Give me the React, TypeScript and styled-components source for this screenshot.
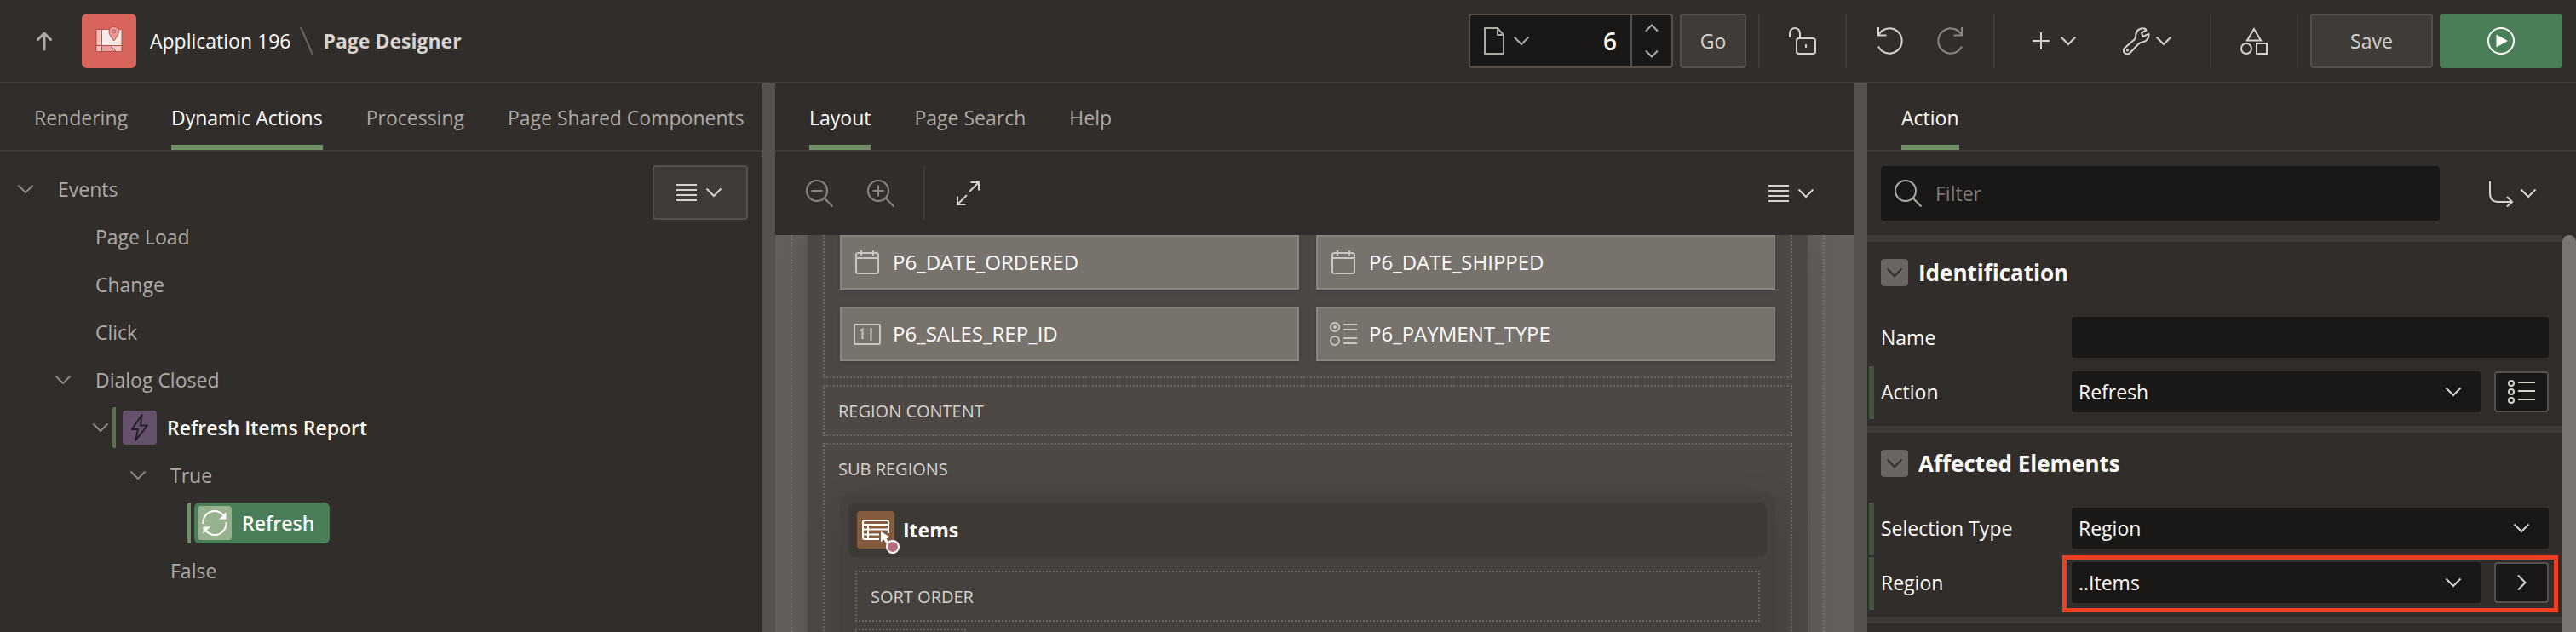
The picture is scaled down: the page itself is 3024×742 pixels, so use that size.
import React from 'react';
import styled, { createGlobalStyle, css } from 'styled-components';

const color = {
  bg: '#312d2a',
  line: '#3f3b37',
  splitter: '#56514c',
  field: '#191816',
  button: '#3f3b37',
  buttonBorder: '#55504b',
  text: '#fcfbfa',
  muted: '#aeaaa6',
  dim: '#8b8681',
  icon: '#d6d2ce',
  accent: '#739168',
  green: '#4a7e59',
};

const GlobalStyle = createGlobalStyle`
  *, *::before, *::after { box-sizing: border-box; }
  body {
    margin: 0;
    background: ${color.bg};
    color: ${color.text};
    font: 400 23px/32px 'Open Sans', 'Noto Sans', sans-serif;
    overflow: hidden;
  }
  button, input, select { font: inherit; color: inherit; margin: 0; }
  button { background: none; border: 0; padding: 0; cursor: pointer; }
  svg { display: block; flex: none; fill: none; }
  h2, ul { margin: 0; padding: 0; }
`;

/* ---------- shell ---------- */

const Page = styled.div`
  height: 100vh;
  display: flex;
  flex-direction: column;
`;

const Header = styled.header`
  flex: none;
  height: 98px;
  display: flex;
  align-items: center;
  padding: 0 16px 0 20px;
  border-bottom: 2px solid ${color.line};
`;

const Workspace = styled.div`
  flex: 1;
  min-height: 0;
  display: grid;
  grid-template-columns: minmax(0, 894fr) 16px minmax(0, 1266fr) 16px minmax(0, 832fr);
  grid-template-rows: minmax(0, 1fr);
`;

const Splitter = styled.div`
  background: ${color.splitter};
`;

const Panel = styled.section`
  display: flex;
  flex-direction: column;
  min-width: 0;
  overflow: hidden;
`;

/* ---------- header ---------- */

const UpButton = styled.button`
  width: 64px;
  height: 64px;
  display: grid;
  place-items: center;
  color: ${color.muted};
`;

const AppBadge = styled.a`
  width: 64px;
  height: 64px;
  margin-left: 12px;
  border-radius: 6px;
  background: #d9645b;
`;

const Crumbs = styled.nav`
  display: flex;
  align-items: center;
  gap: 11px;
  margin-left: 16px;
  white-space: nowrap;
  a {
    color: ${color.text};
    text-decoration: none;
  }
  strong {
    font-weight: 700;
    color: ${color.icon};
  }
`;

const HeaderTools = styled.div`
  display: flex;
  align-items: center;
  margin-left: auto;
`;

const PageFinder = styled.div`
  display: flex;
  width: 240px;
  height: 64px;
  border: 2px solid ${color.buttonBorder};
  border-radius: 4px;
  background: ${color.field};
  overflow: hidden;
`;

const PickerButton = styled.button`
  display: flex;
  align-items: center;
  gap: 4px;
  padding-left: 12px;
  color: ${color.muted};
`;

const PageNumber = styled.input`
  flex: 1;
  min-width: 0;
  padding: 0 16px;
  border: 0;
  background: none;
  text-align: right;
  font-size: 28px;
  font-weight: 600;
`;

const Stepper = styled.div`
  width: 48px;
  display: grid;
  grid-template-rows: 1fr 1fr;
  border-left: 2px solid ${color.buttonBorder};
  color: ${color.muted};
  button {
    display: grid;
    place-items: center;
  }
`;

const SolidButton = styled.button<{ $width: number; $primary?: boolean }>`
  flex: none;
  width: ${(p) => p.$width}px;
  height: 64px;
  margin-left: 8px;
  display: grid;
  place-items: center;
  border-radius: 4px;
  border: 2px solid ${(p) => (p.$primary ? color.green : color.buttonBorder)};
  background: ${(p) => (p.$primary ? color.green : color.button)};
  color: ${(p) => (p.$primary ? color.text : color.icon)};
  font-weight: 500;
`;

const ToolGroup = styled.div`
  display: flex;
  height: 64px;
  margin-left: 14px;
  padding-left: 14px;
  border-left: 2px solid ${color.line};
`;

const HeaderEnd = styled.div`
  display: flex;
  height: 64px;
  margin-left: 14px;
  padding-left: 6px;
  border-left: 2px solid ${color.line};
`;

const IconButton = styled.button<{ $dim?: boolean }>`
  width: 72px;
  height: 64px;
  display: grid;
  place-items: center;
  color: ${(p) => (p.$dim ? color.dim : color.icon)};
`;

const MenuButton = styled.button<{ $boxed?: boolean }>`
  flex: none;
  width: 112px;
  height: 64px;
  display: flex;
  align-items: center;
  justify-content: center;
  gap: 4px;
  padding-right: 4px;
  color: ${color.icon};
  ${(p) =>
    p.$boxed &&
    css`
      background: ${color.button};
      border: 2px solid ${color.buttonBorder};
      border-radius: 4px;
    `}
`;

/* ---------- tabs ---------- */

const TabBar = styled.div`
  flex: none;
  height: 80px;
  display: flex;
  gap: 51px;
  padding-left: 40px;
  border-bottom: 2px solid ${color.line};
`;

const Tab = styled.button<{ $active?: boolean }>`
  height: 78px;
  padding-top: 8px;
  white-space: nowrap;
  color: ${(p) => (p.$active ? color.text : color.muted)};
  border-bottom: 6px solid ${(p) => (p.$active ? color.accent : 'transparent')};
`;

/* ---------- tree ---------- */

const TreeArea = styled.div`
  display: flex;
  align-items: flex-start;
  padding: 16px 16px 0 0;
`;

const Tree = styled.ul`
  flex: 1;
  min-width: 0;
  list-style: none;
`;

const TreeRow = styled.li<{ $level: number }>`
  height: 56px;
  display: flex;
  align-items: center;
  padding-left: ${(p) => p.$level * 44 - 28}px;
  white-space: nowrap;
  color: ${color.muted};
`;

const Toggle = styled.button`
  width: 28px;
  height: 32px;
  display: grid;
  place-items: center;
  color: ${color.dim};
`;

const ToggleSpace = styled.span`
  width: 28px;
`;

const NodeLabel = styled.span`
  padding-left: 24px;
`;

const MarkedNode = styled.span<{ $selected?: boolean }>`
  height: 48px;
  display: flex;
  padding-left: 4px;
  border-left: 4px solid ${(p) => (p.$selected ? '#739168' : '#58724f')};
  border-radius: 2px;
`;

const NodePill = styled.span<{ $selected?: boolean }>`
  display: flex;
  align-items: center;
  gap: 12px;
  padding: 0 18px 0 4px;
  border-radius: 6px;
  color: ${color.text};
  font-weight: 600;
  background: ${(p) => (p.$selected ? color.green : 'none')};
`;

const NodeIcon = styled.span<{ $bg: string; $fg: string }>`
  width: 40px;
  height: 40px;
  display: grid;
  place-items: center;
  border-radius: 4px;
  background: ${(p) => p.$bg};
  color: ${(p) => p.$fg};
`;

/* ---------- layout canvas ---------- */

const Toolbar = styled.div`
  flex: none;
  height: 98px;
  display: flex;
  align-items: center;
  padding: 0 16px;
`;

const Spacer = styled.span`
  flex: 1;
`;

const Canvas = styled.div`
  flex: 1;
  min-height: 0;
  display: flex;
  padding: 0 34px 0 18px;
  background: #65605b;
  overflow: hidden;
`;

const CanvasFrame = styled.div`
  flex: 1;
  min-width: 0;
  padding: 0 18px;
  border: dotted #7f7974;
  border-width: 0 2px;
`;

const RegionBox = styled.div`
  min-height: 100%;
  padding: 0 18px;
  display: flex;
  flex-direction: column;
  gap: 8px;
  background: #4d4844;
  box-shadow: 0 0 40px rgba(0, 0, 0, 0.2);
`;

const ItemSlot = styled.div`
  display: grid;
  grid-template-columns: 1fr 1fr;
  gap: 20px;
  padding: 0 18px 18px;
  border: 2px dotted #6b6662;
  border-top: 0;
`;

const PageItem = styled.div`
  height: 64px;
  display: flex;
  align-items: center;
  gap: 14px;
  padding-left: 14px;
  border: 2px solid #8b8580;
  background: #78726d;
  box-shadow: 0 2px 4px rgba(0, 0, 0, 0.15);
  color: ${color.text};
  font-size: 24px;
  font-weight: 500;
  svg {
    color: #c9c5c1;
  }
`;

const Slot = styled.div<{ $short?: boolean }>`
  flex: none;
  border: 2px dotted #6b6662;
  ${(p) => p.$short && 'width: 130px; height: 60px;'}
`;

const SlotTitle = styled.div`
  height: 56px;
  padding-left: 16px;
  font-size: 20px;
  line-height: 58px;
  color: ${color.icon};
`;

const SubRegion = styled.div`
  margin: 2px 18px 0;
  padding: 10px 10px 60px;
  border-radius: 10px;
  background: #45413c;
  box-shadow: 0 16px 48px rgba(0, 0, 0, 0.12);
`;

const SubRegionHead = styled.div`
  height: 64px;
  display: flex;
  align-items: center;
  gap: 10px;
  padding-left: 10px;
  border-radius: 8px;
  background: #3d3a35;
  font-weight: 700;
`;

const ReportIcon = styled.span`
  width: 44px;
  height: 44px;
  border-radius: 4px;
  background: #855b3d;
  svg {
    overflow: visible;
  }
`;

const SubSlots = styled.div`
  display: flex;
  flex-direction: column;
  gap: 8px;
  padding: 16px 8px 0;
`;

/* ---------- property editor ---------- */

const FilterBar = styled.div`
  flex: none;
  height: 98px;
  display: flex;
  align-items: center;
  gap: 32px;
  padding: 0 16px;
`;

const FilterBox = styled.label`
  flex: 1;
  height: 64px;
  display: flex;
  align-items: center;
  gap: 16px;
  padding: 0 16px;
  border-radius: 4px;
  background: ${color.field};
  color: ${color.muted};
  input {
    flex: 1;
    min-width: 0;
    padding: 0;
    border: 0;
    outline: 0;
    background: none;
  }
  input::placeholder {
    color: #7f7a75;
    opacity: 1;
  }
`;

const Properties = styled.div`
  flex: 1;
  min-height: 0;
  display: flex;
`;

const PropertyList = styled.div`
  flex: 1;
  min-width: 0;
`;

const ScrollThumb = styled.div`
  width: 16px;
  border-radius: 8px 8px 0 0;
  background: #7a7571;
`;

const Group = styled.section`
  border-top: 8px solid ${color.line};
  padding-bottom: 8px;
`;

const GroupHead = styled.div`
  display: flex;
  align-items: center;
  gap: 12px;
  padding: 20px 16px 28px;
  h2 {
    font-size: 26px;
    line-height: 32px;
    font-weight: 700;
  }
`;

const GroupToggle = styled.button`
  width: 32px;
  height: 32px;
  display: grid;
  place-items: center;
  border-radius: 4px;
  background: #6b6661;
  color: ${color.bg};
`;

const Property = styled.div<{ $changed?: boolean }>`
  height: 62px;
  margin: 2px 0 0 2px;
  display: flex;
  align-items: center;
  padding: 0 16px 2px 8px;
  border-left: 6px solid ${(p) => (p.$changed ? '#3d5742' : 'transparent')};
  label {
    flex: none;
    width: 224px;
    font-weight: 500;
  }
`;

const Controls = styled.div`
  position: relative;
  flex: 1;
  min-width: 0;
  display: flex;
  gap: 16px;
`;

const inputLook = css`
  width: 100%;
  height: 48px;
  padding: 0 8px;
  border: 0;
  border-radius: 4px;
  background: ${color.field};
  font-weight: 500;
  appearance: none;
`;

const TextInput = styled.input`
  ${inputLook}
`;

const SelectBox = styled.div`
  flex: 1;
  min-width: 0;
  display: grid;
  align-items: center;
  color: ${color.icon};
  > * {
    grid-area: 1 / 1;
  }
  select {
    ${inputLook}
    color: ${color.text};
  }
  svg {
    justify-self: end;
    margin-right: 20px;
    pointer-events: none;
  }
`;

const SideButton = styled.button`
  flex: none;
  width: 64px;
  height: 48px;
  display: grid;
  place-items: center;
  border: 2px solid ${color.buttonBorder};
  border-radius: 4px;
  background: ${color.field};
  color: ${color.icon};
`;

const Highlight = styled.div`
  position: absolute;
  inset: -8px -11px -11px;
  border: 5px solid #ee4025;
  pointer-events: none;
`;

/* ---------- icons ---------- */

const Icon = ({ size = 32, width = 2, children }: { size?: number; width?: number; children: React.ReactNode }) => (
  <svg width={size} height={size} viewBox={`0 0 ${size} ${size}`} stroke="currentColor" strokeWidth={width} aria-hidden="true">
    {children}
  </svg>
);

const Chevron = () => (
  <Icon size={24}>
    <path d="M3.5 7.5 12 16l8.500-8.500" />
  </Icon>
);
const ChevronSmall = ({ up }: { up?: boolean }) => (
  <Icon size={16}>
    <path d={up ? 'M1 11.500 8 4.500l7 7' : 'M1 4.500 8 11.500l7-7'} />
  </Icon>
);
const Lines = () => (
  <Icon>
    <path d="M4 7h24M4 13h24M4 19h24M4 25h24" />
  </Icon>
);
const Magnifier = ({ children }: { children?: React.ReactNode }) => (
  <Icon>
    <circle cx="13" cy="13" r="12" />
    <path d="m21.500 21.500 10 10" />
    {children}
  </Icon>
);
const Calendar = () => (
  <Icon>
    <rect x="3" y="5" width="26" height="24" rx="2.500" />
    <path d="M3 11h26M9 2v6M23 2v6" />
  </Icon>
);

const AppLogo = () => (
  <svg width="64" height="64" viewBox="0 0 64 64" stroke="#b5504a" strokeWidth="1" aria-hidden="true">
    <rect x="17" y="18.500" width="30" height="26" rx="1" fill="#f7ebe9" />
    <path d="M17 18.500h6.500v19H17z" fill="#eebfbb" />
    <path d="M17 37.500h6.500v7H17zM33.500 37.500H47v7h-6.500z" fill="#f0c7c4" />
    <path d="M23.500 37.500h10l7 7h-17z" fill="#e5a19c" />
    <path d="M37.700 32c-4-5-5.700-8.200-5.700-11a5.700 5.700 0 0 1 11.400 0c0 2.800-1.700 6-5.700 11z" fill="#e59a94" />
    <circle cx="37.700" cy="21" r="1.800" fill="#e5a19c" />
  </svg>
);

/* ---------- parts ---------- */

const Select = ({ id, value }: { id: string; value: string }) => (
  <SelectBox>
    <select id={id} defaultValue={value}>
      <option>{value}</option>
    </select>
    <Chevron />
  </SelectBox>
);

const Tabs = ({ names, active }: { names: string[]; active: string }) => (
  <TabBar role="tablist">
    {names.map((n) => (
      <Tab key={n} role="tab" aria-selected={n === active} $active={n === active}>
        {n}
      </Tab>
    ))}
  </TabBar>
);

const Branch = ({ level, label, open, children }: { level: number; label?: string; open?: boolean; children?: React.ReactNode }) => (
  <TreeRow $level={level}>
    {open ? (
      <Toggle aria-label="Collapse">
        <Chevron />
      </Toggle>
    ) : (
      <ToggleSpace />
    )}
    {label ? <NodeLabel>{label}</NodeLabel> : children}
  </TreeRow>
);

export default function App() {
  return (
    <Page>
      <GlobalStyle />
      <Header>
        <UpButton aria-label="Up">
          <Icon width={3}>
            <path d="M16 26V8M8.500 14.500 16 7l7.500 7.500" strokeLinecap="round" strokeLinejoin="round" />
          </Icon>
        </UpButton>
        <AppBadge href="#app" aria-label="Application">
          <AppLogo />
        </AppBadge>
        <Crumbs>
          <a href="#app">Application 196</a>
          <svg width="16" height="32" viewBox="0 0 16 32" stroke="#6b6661" strokeWidth="2" aria-hidden="true">
            <path d="M1 0l14 32" />
          </svg>
          <strong>Page Designer</strong>
        </Crumbs>
        <HeaderTools>
          <PageFinder>
            <PickerButton aria-label="Page finder">
              <Icon>
                <path d="M5 1h15l7 8v22H5zM20 1v8h7" strokeLinejoin="round" />
              </Icon>
              <Chevron />
            </PickerButton>
            <PageNumber aria-label="Page number" defaultValue="6" />
            <Stepper>
              <button aria-label="Next page">
                <ChevronSmall up />
              </button>
              <button aria-label="Previous page">
                <ChevronSmall />
              </button>
            </Stepper>
          </PageFinder>
          <SolidButton $width={78}>Go</SolidButton>
          <ToolGroup>
            <IconButton aria-label="Page unlocked">
              <Icon>
                <rect x="9" y="13" width="22" height="18" rx="3" />
                <path d="M1 12V7a6 6 0 0 1 12 0v6M20 20v4" />
              </Icon>
            </IconButton>
          </ToolGroup>
          <ToolGroup>
            <IconButton aria-label="Undo">
              <Icon>
                <path d="M3 9.500A14.600 14.600 0 1 1 3 22.500M3 0v9.500h9.500" />
              </Icon>
            </IconButton>
            <IconButton aria-label="Redo" $dim>
              <Icon>
                <path d="M29 9.500A14.600 14.600 0 1 0 29 22.500M29 0v9.500h-9.500" />
              </Icon>
            </IconButton>
          </ToolGroup>
          <ToolGroup>
            <MenuButton aria-label="Create">
              <Icon>
                <path d="M6 16h20M16 6v20" />
              </Icon>
              <Chevron />
            </MenuButton>
            <MenuButton aria-label="Utilities">
              <Icon>
                <path
                  strokeLinejoin="round"
                  d="M27.500 3.500 22 6.500l1.500 4.500 7-3.200C31 12 28.500 16.500 24 17.200c-3 .4-4 .6-5.500 2.300L8.500 30c-2 2-5.500 1.500-7-.5-1-2-.7-4 1-5.500l11-9.500c1.500-1.500 1.800-2.500 1.700-5C15.200 4 20 .8 24 1.200c1.500.1 3 .8 3.500 2.300z"
                />
                <circle cx="5.500" cy="27" r="0.600" />
              </Icon>
              <Chevron />
            </MenuButton>
          </ToolGroup>
          <ToolGroup>
            <IconButton aria-label="Shared components">
              <Icon>
                <path d="M16 2l8 13.500H8zM19 19h12v12H19z" />
                <circle cx="7" cy="25" r="6" />
              </Icon>
            </IconButton>
          </ToolGroup>
          <HeaderEnd>
            <SolidButton $width={144}>Save</SolidButton>
            <SolidButton $width={144} $primary aria-label="Save and run page">
              <Icon>
                <circle cx="16" cy="16" r="15" />
                <path d="M10.500 8.500v15L24 16z" fill="currentColor" stroke="none" />
              </Icon>
            </SolidButton>
          </HeaderEnd>
        </HeaderTools>
      </Header>

      <Workspace>
        <Panel>
          <Tabs names={['Rendering', 'Dynamic Actions', 'Processing', 'Page Shared Components']} active="Dynamic Actions" />
          <TreeArea>
            <Tree>
              <Branch level={1} open label="Events" />
              <Branch level={2} label="Page Load" />
              <Branch level={2} label="Change" />
              <Branch level={2} label="Click" />
              <Branch level={2} open label="Dialog Closed" />
              <Branch level={3} open>
                <MarkedNode>
                  <NodePill>
                    <NodeIcon $bg="#65516b" $fg="#231f26">
                      <Icon>
                        <path d="M18.500 1 7 18h7l-3 13L25 13.500h-8z" strokeLinejoin="round" />
                      </Icon>
                    </NodeIcon>
                    Refresh Items Report
                  </NodePill>
                </MarkedNode>
              </Branch>
              <Branch level={4} open label="True" />
              <Branch level={5}>
                <MarkedNode $selected>
                  <NodePill $selected>
                    <NodeIcon $bg="#98b18e" $fg="#fff">
                      <Icon>
                        <path d="M2.500 17A13.500 13.500 0 0 1 26 6.500M29.500 15A13.500 13.500 0 0 1 6 25.500" />
                        <path d="M29.500 3v8.500H21zM2.500 29v-8.500H11z" fill="currentColor" stroke="none" />
                      </Icon>
                    </NodeIcon>
                    Refresh
                  </NodePill>
                </MarkedNode>
              </Branch>
              <Branch level={4} label="False" />
            </Tree>
            <MenuButton $boxed aria-label="Tree options">
              <Lines />
              <Chevron />
            </MenuButton>
          </TreeArea>
        </Panel>

        <Splitter />

        <Panel>
          <Tabs names={['Layout', 'Page Search', 'Help']} active="Layout" />
          <Toolbar>
            <IconButton $dim aria-label="Zoom out">
              <Magnifier>
                <path d="M6.500 13h13" />
              </Magnifier>
            </IconButton>
            <IconButton $dim aria-label="Zoom in">
              <Magnifier>
                <path d="M6.500 13h13M13 6.500v13" />
              </Magnifier>
            </IconButton>
            <ToolGroup>
              <IconButton aria-label="Expand">
                <Icon>
                  <path d="M18 14 29 3M19.500 3H29v9.500M15 18 4 29M13.500 29H4v-9.500" />
                </Icon>
              </IconButton>
            </ToolGroup>
            <Spacer />
            <MenuButton aria-label="Layout options">
              <Lines />
              <Chevron />
            </MenuButton>
          </Toolbar>
          <Canvas>
            <CanvasFrame>
              <RegionBox>
                <ItemSlot>
                  <PageItem>
                    <Calendar />
                    P6_DATE_ORDERED
                  </PageItem>
                  <PageItem>
                    <Calendar />
                    P6_DATE_SHIPPED
                  </PageItem>
                  <PageItem>
                    <Icon>
                      <rect x="1" y="5" width="30" height="23" rx="1" />
                      <path d="M7.500 12.500 10.500 10.500V22M20.500 9v15" />
                    </Icon>
                    P6_SALES_REP_ID
                  </PageItem>
                  <PageItem>
                    <Icon>
                      <circle cx="6" cy="8" r="5" />
                      <circle cx="6" cy="24" r="5" />
                      <circle cx="6" cy="8" r="1" />
                      <path d="M16 5h16M16 11h16M16 21h16M16 27h16" />
                    </Icon>
                    P6_PAYMENT_TYPE
                  </PageItem>
                </ItemSlot>
                <Slot>
                  <SlotTitle>REGION CONTENT</SlotTitle>
                </Slot>
                <Slot>
                  <SlotTitle>SUB REGIONS</SlotTitle>
                  <SubRegion>
                    <SubRegionHead>
                      <ReportIcon>
                        <svg width="44" height="44" viewBox="0 0 44 44" stroke="#fff" strokeWidth="2" aria-hidden="true">
                          <path d="M26 33H9a2 2 0 0 1-2-2V13a2 2 0 0 1 2-2h26a2 2 0 0 1 2 2v13M7 16h30M7 21.500h30M7 27.500h19M13 16v17" />
                          <path d="M28 24v12.500l3.500-3 4.500 7 2.500-1.500-4-6.500 4-2z" fill="#fff" stroke="none" />
                          <circle cx="42" cy="42" r="7" fill="#b56c7f" />
                        </svg>
                      </ReportIcon>
                      Items
                    </SubRegionHead>
                    <SubSlots>
                      <Slot>
                        <SlotTitle>SORT ORDER</SlotTitle>
                      </Slot>
                      <Slot $short />
                    </SubSlots>
                  </SubRegion>
                </Slot>
              </RegionBox>
            </CanvasFrame>
          </Canvas>
        </Panel>

        <Splitter />

        <Panel>
          <Tabs names={['Action']} active="Action" />
          <FilterBar>
            <FilterBox>
              <Magnifier />
              <input type="text" placeholder="Filter" aria-label="Filter" />
            </FilterBox>
            <MenuButton aria-label="Go to group">
              <Icon>
                <path d="M3 2v14q0 10 10 10h16M23 20l6 6-6 5.500" />
              </Icon>
              <Chevron />
            </MenuButton>
          </FilterBar>
          <Properties>
            <PropertyList>
              <Group>
                <GroupHead>
                  <GroupToggle aria-label="Collapse Identification">
                    <Chevron />
                  </GroupToggle>
                  <h2>Identification</h2>
                </GroupHead>
                <Property>
                  <label htmlFor="name">Name</label>
                  <Controls>
                    <TextInput id="name" type="text" />
                  </Controls>
                </Property>
                <Property $changed>
                  <label htmlFor="action">Action</label>
                  <Controls>
                    <Select id="action" value="Refresh" />
                    <SideButton aria-label="Quick pick">
                      <Icon>
                        <circle cx="4" cy="6" r="3" />
                        <circle cx="4" cy="16" r="3" />
                        <circle cx="4" cy="26" r="3" />
                        <path d="M12 5h20M12 15h20M12 25h20" />
                      </Icon>
                    </SideButton>
                  </Controls>
                </Property>
              </Group>
              <Group>
                <GroupHead>
                  <GroupToggle aria-label="Collapse Affected Elements">
                    <Chevron />
                  </GroupToggle>
                  <h2>Affected Elements</h2>
                </GroupHead>
                <Property $changed>
                  <label htmlFor="selection-type">Selection Type</label>
                  <Controls>
                    <Select id="selection-type" value="Region" />
                  </Controls>
                </Property>
                <Property $changed>
                  <label htmlFor="region">Region</label>
                  <Controls>
                    <Select id="region" value="..Items" />
                    <SideButton aria-label="Go to region">
                      <Icon size={24}>
                        <path d="M8 3.500 16.500 12 8 20.500" />
                      </Icon>
                    </SideButton>
                    <Highlight />
                  </Controls>
                </Property>
              </Group>
              <Group />
            </PropertyList>
            <ScrollThumb />
          </Properties>
        </Panel>
      </Workspace>
    </Page>
  );
}
